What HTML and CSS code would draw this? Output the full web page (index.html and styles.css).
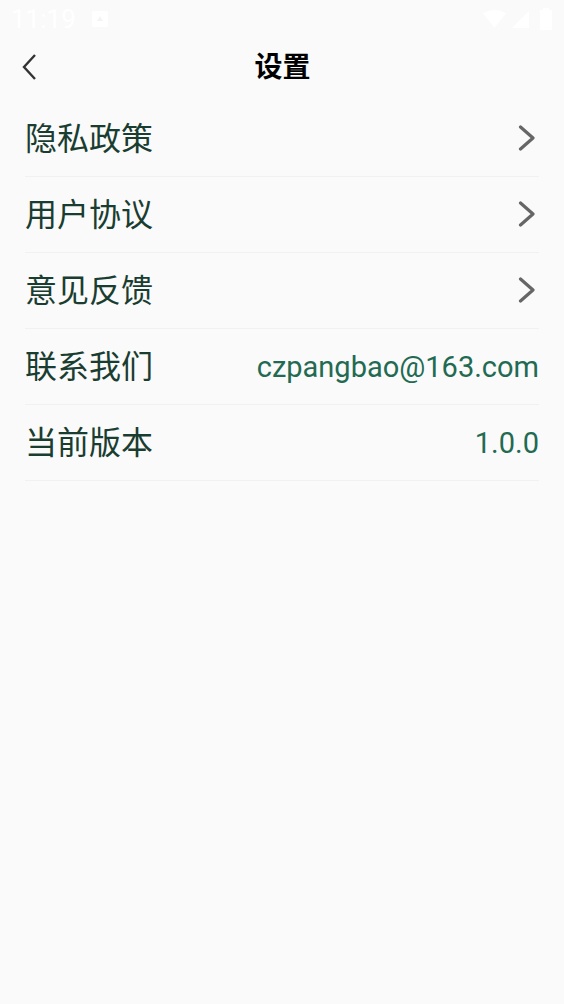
FILE: index.html
```html
<!DOCTYPE html>
<html lang="zh-CN">
<head>
    <meta charset="UTF-8">
    <meta name="viewport" content="width=device-width, initial-scale=1.0">
    <title>设置</title>
    <link rel="stylesheet" href="styles.css">
</head>
<body>

<div class="status-bar">
    <div class="status-left">
        <span class="status-time">11:19</span>
        <svg class="status-note" width="16" height="16" viewBox="0 0 16 16"><rect x="0" y="0" width="16" height="16" rx="2" fill="#fff"/><path d="M8 5l3 5H5z" fill="#f4f4f4"/></svg>
    </div>
    <div class="status-right">
        <svg width="23" height="20" viewBox="0 0 24 20"><path d="M0 4Q12 -3 24 4L12 19z" fill="#fff"/></svg>
        <svg width="19" height="19" viewBox="0 0 20 20"><path d="M19 1V19H1z" fill="#fff"/></svg>
        <svg class="status-battery" width="14" height="22" viewBox="0 0 14 22"><path d="M4 0h6v2h3v20H1V2h3z" fill="#fff"/></svg>
    </div>
</div>

<header class="title-bar">
    <svg class="back-icon" width="18" height="28" viewBox="0 0 18 28"><path d="M14 2L3 14l11 12" fill="none" stroke="#333" stroke-width="2.4"/></svg>
    <h1>设置</h1>
</header>

<div class="settings-list">
    <div class="settings-row">
        <span class="row-label">隐私政策</span>
        <svg class="row-arrow" width="18" height="26" viewBox="0 0 18 26"><path d="M2.5 2L15 13 2.5 24" fill="none" stroke="#666" stroke-width="3.2" stroke-linecap="round" stroke-linejoin="round"/></svg>
    </div>
    <div class="settings-row">
        <span class="row-label">用户协议</span>
        <svg class="row-arrow" width="18" height="26" viewBox="0 0 18 26"><path d="M2.5 2L15 13 2.5 24" fill="none" stroke="#666" stroke-width="3.2" stroke-linecap="round" stroke-linejoin="round"/></svg>
    </div>
    <div class="settings-row">
        <span class="row-label">意见反馈</span>
        <svg class="row-arrow" width="18" height="26" viewBox="0 0 18 26"><path d="M2.5 2L15 13 2.5 24" fill="none" stroke="#666" stroke-width="3.2" stroke-linecap="round" stroke-linejoin="round"/></svg>
    </div>
    <div class="settings-row">
        <span class="row-label">联系我们</span>
        <span class="row-value">czpangbao@163.com</span>
    </div>
    <div class="settings-row">
        <span class="row-label">当前版本</span>
        <span class="row-value">1.0.0</span>
    </div>
</div>

</body>
</html>
```

FILE: styles.css
```css
body {
    margin: 0;
    padding: 0;
    background-color: #fafafa;
    font-family: Roboto, "Noto Sans CJK SC", sans-serif;
}

.status-bar {
    height: 38px;
    display: flex;
    justify-content: space-between;
    align-items: center;
    padding: 0 11px 0 11px;
}

.status-left,
.status-right {
    display: flex;
    align-items: center;
}

.status-left {
    gap: 16px;
}

.status-right {
    gap: 5px;
}

.status-battery {
    margin-left: 4px;
}

.status-time {
    color: #fff;
    font-size: 26px;
}

.title-bar {
    height: 58px;
    padding-bottom: 4px;
    box-sizing: border-box;
    display: flex;
    align-items: center;
    justify-content: center;
    position: relative;
}

.title-bar h1 {
    margin: 0 0 0 1px;
    font-size: 28px;
    font-weight: 700;
    color: #000;
}

.back-icon {
    position: absolute;
    left: 21px;
    top: 15px;
}

.settings-list {
    margin: 5px 25px 0 25px;
}

.settings-row {
    height: 75px;
    border-bottom: 1px solid #f1f1f1;
    display: flex;
    justify-content: space-between;
    align-items: center;
}

.row-label {
    font-size: 32px;
    color: #1a3d31;
    padding-bottom: 5px;
}

.row-value {
    font-size: 29px;
    color: #226a52;
}

.row-arrow {
    margin-right: 3px;
    margin-bottom: 2px;
}
```
